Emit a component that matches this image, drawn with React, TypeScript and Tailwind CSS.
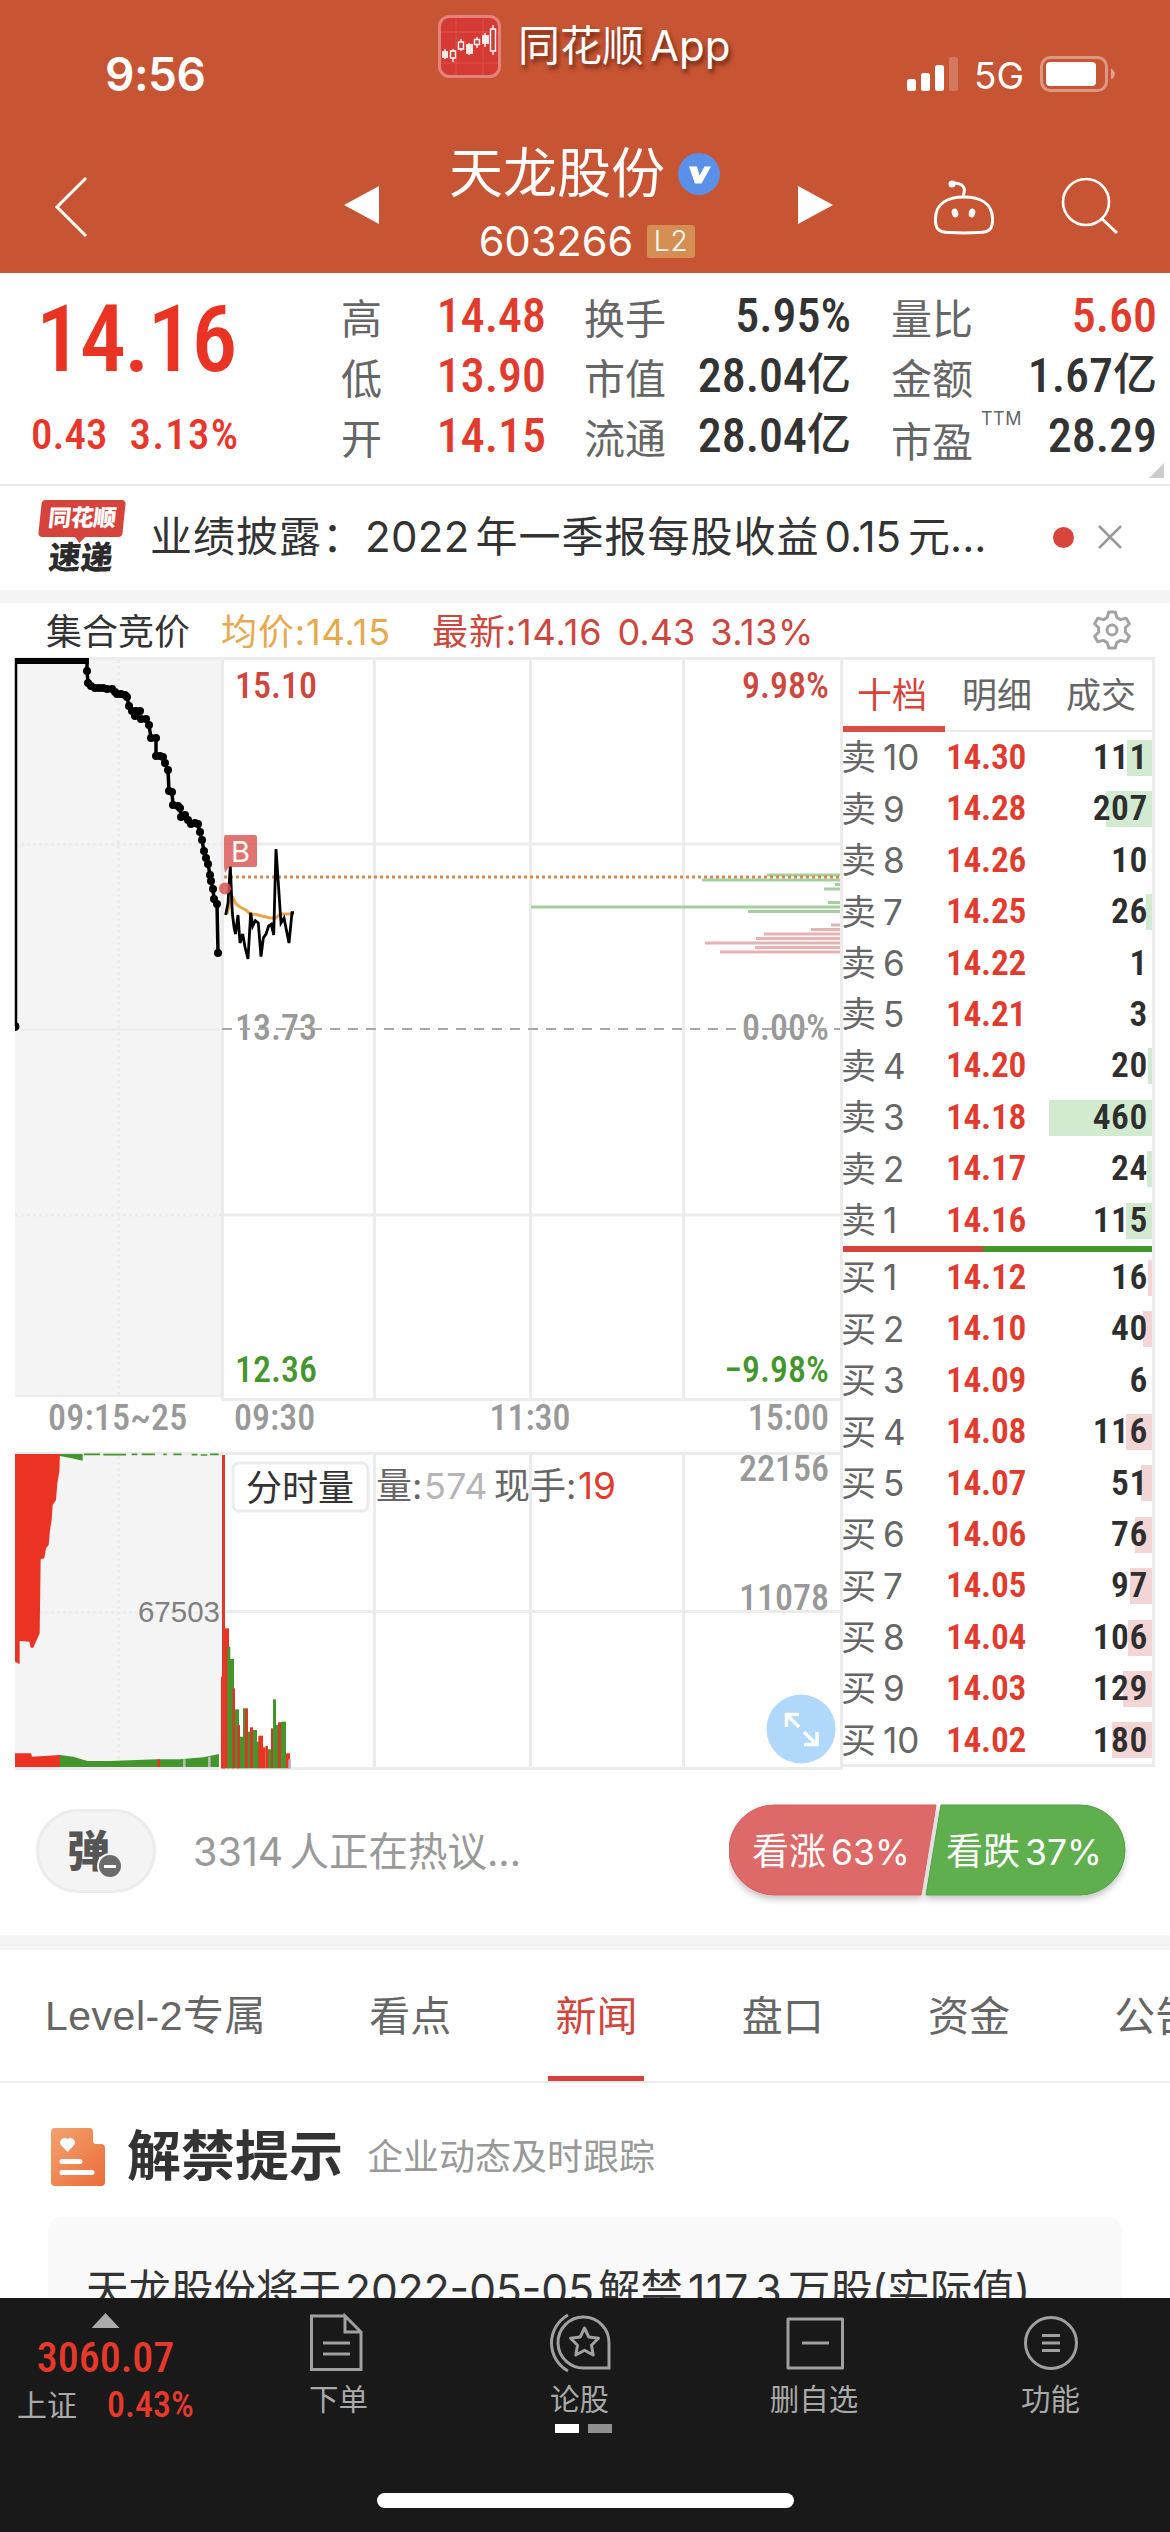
import { useState } from "react";

type Level = { label: string; no: number; price: string; volume: number };

const sells: Level[] = [
  { label: "卖", no: 10, price: "14.30", volume: 111 },
  { label: "卖", no: 9, price: "14.28", volume: 207 },
  { label: "卖", no: 8, price: "14.26", volume: 10 },
  { label: "卖", no: 7, price: "14.25", volume: 26 },
  { label: "卖", no: 6, price: "14.22", volume: 1 },
  { label: "卖", no: 5, price: "14.21", volume: 3 },
  { label: "卖", no: 4, price: "14.20", volume: 20 },
  { label: "卖", no: 3, price: "14.18", volume: 460 },
  { label: "卖", no: 2, price: "14.17", volume: 24 },
  { label: "卖", no: 1, price: "14.16", volume: 115 },
];

const buys: Level[] = [
  { label: "买", no: 1, price: "14.12", volume: 16 },
  { label: "买", no: 2, price: "14.10", volume: 40 },
  { label: "买", no: 3, price: "14.09", volume: 6 },
  { label: "买", no: 4, price: "14.08", volume: 116 },
  { label: "买", no: 5, price: "14.07", volume: 51 },
  { label: "买", no: 6, price: "14.06", volume: 76 },
  { label: "买", no: 7, price: "14.05", volume: 97 },
  { label: "买", no: 8, price: "14.04", volume: 106 },
  { label: "买", no: 9, price: "14.03", volume: 129 },
  { label: "买", no: 10, price: "14.02", volume: 180 },
];

// call auction track, 09:15 - 09:25
const auction = [
  [87, 661], [87, 671], [88, 683], [91, 686], [95, 688], [99, 688], [103, 688], [107, 689], [112, 689],
  [115, 692], [117, 694], [121, 694], [125, 695], [127, 697], [129, 706], [132, 711], [136, 711],
  [140, 711], [135, 716], [141, 719], [146, 719], [149, 725], [151, 738], [156, 738], [156, 756],
  [160, 756], [163, 757], [165, 763], [168, 770], [169, 791], [172, 792], [173, 805], [178, 806],
  [180, 808], [181, 817], [185, 815], [188, 820], [191, 824], [195, 823], [198, 824], [200, 832],
  [202, 840], [204, 851], [206, 858], [208, 864], [210, 875], [211, 881], [213, 889], [214, 899],
  [217, 904], [218, 953],
];

const priceLine =
  "225.7,915 228,903 230.3,866 232.3,913 234,927 235.5,934 238,915 240,943 242.7,934 245,947 248,959 250.7,912.7 252.7,926 255.3,920.7 258.3,923 261,956.7 263.3,938 266,934 268.7,926 271.3,924.3 273.7,935 276,849 281,923 284,918 286,928 289,943 292,912.7 294,912.7";

const averageLine =
  "227,914 231,899 233,898 236,904 240,907 246,910 250,914 256,914.5 262,916 270,918 276,918 280,914 286,914 294,914";

const depthGreen = [[767, 875], [702, 880], [835, 884.5], [824, 889], [828, 902.5], [531, 907], [748, 911.5]];
const depthRed = [[831, 925], [811, 929.5], [764, 934], [756, 938.5], [705, 943], [755, 947.5], [720, 952]];

// [x, width, top, colour] in a 3x grid
const volumes: [number, number, number, string][] = [
  [663, 12, 1190, "#ea3323"], [666, 9, 525, "#e2392b"], [675, 12, 1045, "#ea3323"], [682, 9, 1100, "#43962b"],
  [690, 12, 1137, "#43962b"], [697, 8, 1225, "#d43a2b"], [705, 12, 1288, "#43962b"], [712, 8, 1335, "#d43a2b"],
  [720, 10, 1370, "#43962b"], [729, 7, 1285, "#43962b"], [735, 9, 1285, "#d43a2b"], [744, 7, 1355, "#43962b"],
  [750, 9, 1342, "#d43a2b"], [759, 12, 1350, "#43962b"], [771, 6, 1385, "#43962b"], [775, 14, 1367, "#ea3323"],
  [789, 7, 1402, "#ea3323"], [796, 8, 1398, "#ea3323"], [804, 9, 1408, "#43962b"], [813, 6, 1345, "#d43a2b"],
  [819, 9, 1258, "#43962b"], [828, 6, 1335, "#43962b"], [834, 9, 1327, "#d43a2b"], [843, 15, 1325, "#43962b"],
  [858, 12, 1420, "#ea3323"], [865, 8, 1438, "#b9b9b9"],
];

const num = "font-['Roboto_Condensed',Roboto,'Noto_Sans_CJK_SC',sans-serif]";

function StatusBar() {
  return (
    <div className="flex h-[120px] items-start text-white">
      <div className="mt-[47px] ml-[105px] w-[333px] text-[46px] leading-[54px] font-semibold tracking-[-0.5px]">9:56</div>
      <svg className="mt-[15px] h-[63px] w-[63px]" viewBox="0 0 63 63">
        <rect x="1.5" y="1.5" width="60" height="60" rx="10" fill="#d63a35" stroke="#e4837b" strokeWidth="3" />
        <path d="M18 3v57M45 3v57M3 17h57M3 48h57" stroke="#de514a" strokeWidth="1" />
        <path d="M7 34v10M15 34v13M23 24v12M31 28v12M39 22v11M47 18v14M55 10v30" stroke="#fff" strokeWidth="1.3" />
        <path d="M4 36h6v7h-6zM28 29h7v10h-7zM44 20h7v9h-7z" fill="#ffe9e4" />
        <path d="M12.5 36h5v7h-5zM20.500 27h5v7h-5zM36.500 24.500h5v5h-5zM52.500 14h5v22h-5z" fill="#d63a35" stroke="#fff" strokeWidth="1.4" />
      </svg>
      <div className="mt-[19px] ml-[17px] w-[389px] text-[42px] leading-[54px] [text-shadow:2px_4px_4px_rgba(70,20,5,0.7)]">
        同花顺<span className="ml-[6px]">App</span>
      </div>
      <svg className="mt-[57px] h-[34px] w-[52px]" viewBox="0 0 52 34">
        <rect x="0" y="22" width="9" height="12" rx="2.500" fill="#fff" />
        <rect x="14" y="16" width="9" height="18" rx="2.500" fill="#fff" />
        <rect x="28" y="8" width="9" height="26" rx="2.500" fill="#fff" />
        <rect x="42" y="0" width="9" height="34" rx="2.500" fill="#fff" opacity=".22" />
      </svg>
      <div className="mt-[54px] ml-[15px] w-[66px] text-[37px] leading-[44px]">5G</div>
      <svg className="mt-[56px] h-[36px] w-[76px]" viewBox="0 0 76 36">
        <rect x="1.500" y="1.500" width="65" height="33" rx="9" fill="none" stroke="#fff" strokeWidth="3" opacity=".4" />
        <rect x="6" y="6" width="50" height="24" rx="4" fill="#fff" />
        <path d="M71 12.500c5 2 5 9 0 11z" fill="#fff" opacity=".45" />
      </svg>
    </div>
  );
}

function TitleBar() {
  return (
    <div className="flex h-[153px] items-start text-white">
      <svg className="mt-[55px] ml-[52px] h-[64px] w-[38px]" viewBox="0 0 38 64">
        <path d="M34 3L5 32l29 29" fill="none" stroke="#fff" strokeWidth="3" />
      </svg>
      <svg className="mt-[66px] ml-[254px] h-[38px] w-[35px]" viewBox="0 0 35 38">
        <path d="M0 19L35 0v38z" fill="#fff" />
      </svg>
      <div className="flex w-[419px] flex-col items-center pt-[22px]">
        <div className="flex items-center pr-[8px]">
          <div className="text-[54px] leading-[64px]">天龙股份</div>
          <svg className="ml-[13px] h-[42px] w-[42px]" viewBox="0 0 42 42">
            <circle cx="21" cy="21" r="21" fill="#5a90e8" />
            <path d="M11 13.500h8l2.500 9 5-9h6.500l-9.500 17h-6.500z" fill="#fff" />
          </svg>
        </div>
        <div className="mt-[10px] flex items-center pr-[3px]">
          <div className="text-[41.500px] leading-[50px]">603266</div>
          <div className="ml-[14px] flex h-[33px] w-[48px] items-center justify-center rounded-[3px] bg-[#d68f52] text-[28px] leading-none font-light tracking-[1px]">
            L2
          </div>
        </div>
      </div>
      <svg className="mt-[66px] h-[38px] w-[35px]" viewBox="0 0 35 38">
        <path d="M35 19L0 0v38z" fill="#fff" />
      </svg>
      <svg className="mt-[58px] ml-[99px] h-[58px] w-[64px]" viewBox="0 0 64 58" fill="none" stroke="#fff" strokeWidth="3">
        <path d="M32 19C48 19 60 25 60.500 40C61 51 58 54 47 54.500C38 55 26 55 17 54.500C6 54 3 51 3.500 40C4 25 16 19 32 19Z" />
        <path d="M31 18C35 9 30 5 21 5" />
        <circle cx="20" cy="6" r="3.500" fill="#fff" stroke="none" />
        <ellipse cx="23" cy="35" rx="3.200" ry="4.500" fill="#fff" stroke="none" transform="rotate(-14 23 35)" />
        <ellipse cx="40" cy="35" rx="3.200" ry="4.500" fill="#fff" stroke="none" transform="rotate(14 40 35)" />
      </svg>
      <svg className="mt-[57px] ml-[65px] h-[58px] w-[58px]" viewBox="0 0 58 58" fill="none" stroke="#fff" strokeWidth="2.600">
        <circle cx="25" cy="25" r="23" />
        <path d="M40 41l16 15" strokeWidth="3" />
      </svg>
    </div>
  );
}

function Stat({ label, value, unit, red, sup }: { label: string; value: string; unit?: string; red?: boolean; sup?: string }) {
  return (
    <div className="flex h-[60px] items-start justify-between">
      <div className="flex text-[41px] leading-[60px] text-[#666]">
        <span className={sup ? "relative top-[3px]" : ""}>{label}</span>
        {sup && <span className="ml-2 text-[18px] leading-[20px] tracking-[0.5px]">{sup}</span>}
      </div>
      <div className={`${num} flex text-[48px] leading-[53px] font-medium ${red ? "text-[#e23b2e]" : "text-[#333]"}`}>
        {value}
        {unit && <span className="text-[44px]">{unit}</span>}
      </div>
    </div>
  );
}

function Quote() {
  return (
    <div className="relative flex h-[213px] border-b-2 border-[#ebebeb]">
      <div className={`${num} ml-[31px] w-[310px] text-[#e9362a]`}>
        <div className="mt-[13px] ml-[5px] text-[92px] leading-[108px] font-medium tracking-[-2px] text-[#eb3323]">14.16</div>
        <div className="mt-[14px] flex gap-[22px] text-[43px] leading-[52px] font-medium">
          <span>0.43</span>
          <span className="tracking-[1.200px]">3.13%</span>
        </div>
      </div>
      <div className="w-[205px] pt-[16px]">
        <Stat label="高" value="14.48" red />
        <Stat label="低" value="13.90" red />
        <Stat label="开" value="14.15" red />
      </div>
      <div className="ml-[38px] w-[267px] pt-[16px]">
        <Stat label="换手" value="5.95%" />
        <Stat label="市值" value="28.04" unit="亿" />
        <Stat label="流通" value="28.04" unit="亿" />
      </div>
      <div className="ml-[40px] w-[266px] pt-[16px]">
        <Stat label="量比" value="5.60" red />
        <Stat label="金额" value="1.67" unit="亿" />
        <Stat label="市盈" value="28.29" sup="TTM" />
      </div>
      <div className="absolute right-[6px] bottom-[6px] h-[15px] w-[15px] bg-[#ccc] [clip-path:polygon(100%_0,100%_100%,0_100%)]" />
    </div>
  );
}

function NewsFlash() {
  const [open, setOpen] = useState(true);

  return (
    <div className="flex h-[104px] items-start">
      <div className="mt-[14px] ml-[37px] flex w-[89px] flex-col items-center font-black">
        <div className="relative flex h-[37px] w-[84px] -skew-x-6 items-center justify-center rounded-[4px] bg-[#d6433b] text-[23px] leading-none tracking-[-0.500px] text-white">
          同花顺
          <div className="absolute -bottom-[6px] left-[36px] h-[7px] w-[12px] bg-[#d6433b] [clip-path:polygon(0_0,100%_0,50%_100%)]" />
        </div>
        <div className="mt-[4px] -skew-x-6 text-[32px] leading-[34px] text-[#2b2b2b]">速递</div>
      </div>
      {open && (
        <>
          <div className="mt-[20px] ml-[24px] flex w-[903px] items-baseline text-[42px] leading-[62px] whitespace-nowrap text-[#333]">
            <span className="tracking-[1px]">业绩披露：</span>
            <span className="tracking-[0.300px]">2022</span>
            <span className="ml-[6px] tracking-[1px]">年一季报每股收益</span>
            <span className="ml-[5px]">0.15</span>
            <span className="ml-[7px]">元...</span>
          </div>
          <div className="mt-[41px] h-[21px] w-[21px] rounded-full bg-[#d8433c]" />
          <svg className="mt-[39px] ml-[24px] h-[24px] w-[24px]" viewBox="0 0 24 24" onClick={() => setOpen(false)}>
            <path d="M1 1l22 22M23 1L1 23" stroke="#999" strokeWidth="2.500" />
          </svg>
        </>
      )}
    </div>
  );
}

function ChartHeader() {
  return (
    <div className="flex h-[54px] items-center text-[36px] leading-[54px] whitespace-nowrap">
      <div className="mt-[3px] ml-[46px] w-[175px] text-[#333]">集合竞价</div>
      <div className="mt-[3px] w-[211px] tracking-[0.900px] text-[#e8a84c]">均价:14.15</div>
      <div className="mt-[3px] flex w-[656px] gap-[15px] text-[#cd463d]">
        <span className="tracking-[0.900px]">最新:14.16</span>
        <span>0.43</span>
        <span className="tracking-[0.600px]">3.13%</span>
      </div>
      <svg className="h-[48px] w-[48px]" viewBox="0 0 24 24" fill="none" stroke="#a3a3a3" strokeWidth="1.500" strokeLinejoin="round">
        <path d="M10.400 3h3.200l.8 2.700 1.900 1.100 2.800-.7 1.600 2.800-2 2v2.200l2 2-1.600 2.800-2.800-.7-1.900 1.100-.8 2.700h-3.200l-.8-2.700-1.900-1.100-2.800.7-1.600-2.800 2-2v-2.200l-2-2 1.600-2.800 2.800.7 1.900-1.100z" />
        <circle cx="12" cy="12" r="2.500" />
      </svg>
    </div>
  );
}

function Chart() {
  return (
    <svg className="h-[1113px] w-[843px] shrink-0" viewBox="0 657 843 1113">
      {/* price panel */}
      <rect x="15" y="657" width="207" height="739" fill="#f4f4f4" />
      <g stroke="#ececec" strokeWidth="3" fill="none">
        <path d="M15 658.500H842M222 844H842M222 1215H842M222 1399.500H842" />
        <path d="M222.500 657V1400M374.500 657V1400M530.500 657V1400M683.500 657V1400" />
        <path d="M841.500 657V1770" />
        <path d="M15 1029.500H222M15 1396H222" strokeWidth="2" />
        <path d="M118.500 660V1398M15 844.500H222M15 1215H222" strokeDasharray="3 3" />
      </g>
      <path d="M222 1029H840" stroke="#a8a8a8" strokeWidth="2" strokeDasharray="10 8" />

      {depthGreen.map(([x, y]) => (
        <rect key={y} x={x} y={y - 1.5} width={840 - x} height="3" fill="#a5cf9f" />
      ))}
      {depthRed.map(([x, y]) => (
        <rect key={y} x={x} y={y - 1.5} width={840 - x} height="3" fill="#e8b2b2" />
      ))}
      <path d="M224 877H840" stroke="#d8894a" strokeWidth="3" strokeDasharray="3 3" />

      <path d="M16 658V1026" stroke="#000" strokeWidth="2.500" />
      <path d="M15 1022a4.500 4.500 0 0 1 0 9z" fill="#000" />
      <rect x="15" y="658" width="74" height="6" fill="#000" />
      <polyline points={auction.map((p) => p.join(",")).join(" ")} fill="none" stroke="#000" strokeWidth="3.500" />
      {auction.slice(1).map(([x, y], i) => (
        <circle key={i} cx={x} cy={y} r="4" />
      ))}

      <polyline points={averageLine} fill="none" stroke="#eba64a" strokeWidth="3" />
      <polyline points={priceLine} fill="none" stroke="#000" strokeWidth="2.800" />
      <circle cx="225" cy="888.500" r="6" fill="#d95550" opacity=".85" />
      <path d="M226 835h29a2 2 0 0 1 2 2v28a2 2 0 0 1-2 2h-26l-4 6-1-6v-30a2 2 0 0 1 2-2z" fill="#d95c58" opacity=".85" />
      <text x="240.500" y="862" textAnchor="middle" fill="#fff" className="text-[29px]">B</text>

      <g className={`${num} text-[36px] font-medium`}>
        <text x="235" y="698" fill="#cf463d">15.10</text>
        <text x="829" y="698" textAnchor="end" fill="#cf463d">9.98%</text>
        <text x="235" y="1040" fill="#999">13.73</text>
        <text x="829" y="1040" textAnchor="end" fill="#999">0.00%</text>
        <text x="235" y="1382" fill="#43962b">12.36</text>
        <text x="829" y="1382" textAnchor="end" fill="#43962b">−9.98%</text>
        <g fill="#999">
          <text x="48" y="1430" className="tracking-[0.200px]">09:15~25</text>
          <text x="234" y="1430">09:30</text>
          <text x="530" y="1430" textAnchor="middle">11:30</text>
          <text x="829" y="1430" textAnchor="end">15:00</text>
        </g>
      </g>
      <path d="M222 1029H840" stroke="#a8a8a8" strokeWidth="1.500" strokeDasharray="10 8" />

      {/* volume panel */}
      <rect x="15" y="1453" width="207" height="315" fill="#f4f4f4" />
      <g stroke="#ececec" strokeWidth="3">
        <path d="M15 1453.500H842M222 1611.500H842M15 1768.500H842" />
        <path d="M374.500 1453V1768M530.500 1453V1768M683.500 1453V1768" />
        <path d="M118.500 1456V1766M15 1612.500H222" strokeDasharray="3 3" />
      </g>
      <g transform="translate(0 1280) scale(0.33333)">
        <path d="M45 522H180L178 575 172 610 168 660 158 675 155 720 150 750 146 795 138 805 133 835 122 838 119 1060 110 1080 100 1103H92L88 1085 59 1083V1152L45 1145Z" fill="#ea3323" />
        <path d="M180 522H248V542L215 535 180 528Z" fill="#43962b" />
        <path d="M252 523H300M310 524H378M395 523H412M425 523H465M490 523H500M520 523H545M575 524H592M602 525H622M630 523H656" stroke="#43962b" strokeWidth="5" />
        <path d="M45 1420H93L96 1430 180 1425V1461H45Z" fill="#ea3323" />
        <path d="M180 1425L220 1430 262 1443H330L470 1438H540L610 1432 657 1422V1461H180Z" fill="#43962b" />
        <path d="M476 1438V1461" stroke="#ea3323" strokeWidth="8" />
        <path d="M553 1438V1461M628 1430V1461" stroke="#b9b9b9" strokeWidth="8" />
        {volumes.map(([x, w, top, fill]) => (
          <rect key={x} x={x} y={top} width={w} height={1465 - top} fill={fill} />
        ))}
      </g>
      <text x="220" y="1622" textAnchor="end" fill="#808080" className="font-['Liberation_Sans',Arial,sans-serif] text-[29.500px]">67503</text>
      <g className={`${num} text-[36px] font-medium`} fill="#999">
        <text x="829" y="1480.500" textAnchor="end">22156</text>
        <text x="829" y="1610" textAnchor="end">11078</text>
      </g>
      <rect x="233" y="1463" width="135" height="48" rx="6" fill="#fff" stroke="#ececec" strokeWidth="3" />
      <g className="text-[36px]">
        <text x="246" y="1501" fill="#333">分时量</text>
        <text x="376" y="1499" fill="#666">量:</text>
        <text x="424" y="1499" fill="#b5b5b5">574</text>
        <text x="494" y="1499" fill="#666">现手:</text>
        <text x="578" y="1499" fill="#e23b2e" className="text-[37px]">19</text>
      </g>
      <circle cx="801" cy="1729" r="34.500" fill="#b0d8fb" />
      <path d="M799 1727L787 1715M786.500 1727V1714.500H799M804 1732L816 1744M817 1732V1744.500H804" fill="none" stroke="#fff" strokeWidth="3.500" />
    </svg>
  );
}

function LevelRow({ level, side }: { level: Level; side: "sell" | "buy" }) {
  return (
    <div className="relative flex h-[51.400px] items-center">
      <div
        className={`absolute right-0 top-[8px] h-[36px] ${side === "sell" ? "bg-[#d2ead0]" : "bg-[#f4d5d6]"}`}
        style={{ width: level.volume < 12 ? 0 : Math.round((level.volume * 103) / 460) }}
      />
      <div className="relative flex w-[103px] text-[35px] text-[#666]">
        <span className="-ml-[2px] w-[42px]">{level.label}</span>
        {level.no}
      </div>
      <div className={`${num} relative text-[35.500px] font-semibold tracking-[-0.300px] text-[#e23b2e]`}>{level.price}</div>
      <div className={`${num} relative ml-auto mr-[4px] text-[35.500px] font-semibold tracking-[0.600px] text-[#2e2e2e]`}>{level.volume}</div>
    </div>
  );
}

function OrderBook() {
  return (
    <div className="flex h-[1110px] w-[312px] flex-col border-t-[3px] border-r-[3px] border-b-[3px] border-[#ececec]">
      <div className="flex h-[72px] shrink-0 border-b-2 border-[#ececec] text-[35px] leading-[70px] text-[#666]">
        <div className="-mb-[2px] w-[102px] border-b-[6px] border-[#db4f42] pl-[14px] text-[#d8433c]">十档</div>
        <div className="w-[104px] pl-[17px]">明细</div>
        <div className="pl-[17px]">成交</div>
      </div>
      <div>
        {sells.map((l) => (
          <LevelRow key={l.no} level={l} side="sell" />
        ))}
      </div>
      <div className="flex h-[6px] shrink-0">
        <div className="w-[140px] bg-[#d6433b]" />
        <div className="flex-1 bg-[#43962b]" />
      </div>
      <div>
        {buys.map((l) => (
          <LevelRow key={l.no} level={l} side="buy" />
        ))}
      </div>
    </div>
  );
}

function HotBar() {
  return (
    <div className="flex h-[165px] items-start">
      <div className="relative mt-[39px] ml-[36px] flex h-[84px] w-[120px] items-center rounded-full border-[3px] border-[#ececec] bg-[#f4f4f4] pl-[28px]">
        <span className="text-[43px] leading-none font-black text-[#555]">弹</span>
        <div className="absolute top-[41px] left-[58px] flex h-[26px] w-[26px] items-center justify-center rounded-full border-[2px] border-[#f4f4f4] bg-[#6b6b6b]">
          <div className="h-[3px] w-[12px] bg-white" />
        </div>
      </div>
      <div className="mt-[53px] ml-[37px] w-[536px] text-[39.500px] leading-[58px] text-[#999]">
        3314<span className="ml-[6px]">人正在热议...</span>
      </div>
      <svg className="mt-[29px] h-[112px] w-[408px]" viewBox="0 0 408 112">
        <defs>
          <filter id="drop" x="-10%" y="-10%" width="120%" height="130%">
            <feDropShadow dx="0" dy="4" stdDeviation="3" floodColor="#000" floodOpacity=".22" />
          </filter>
        </defs>
        <g filter="url(#drop)">
          <path d="M45 6H207L192 96H45a45 45 0 0 1 0-90z" fill="#dd6a67" stroke="#d95f5a" />
          <path d="M212 6H351a45 45 0 0 1 0 90H197z" fill="#60af50" stroke="#539e42" />
        </g>
        <text x="23" y="66" fill="#fff" className="text-[37px]">看涨</text>
        <text x="102" y="66" fill="#fff" className="text-[35.500px]">63%</text>
        <text x="217" y="66" fill="#fff" className="text-[37px]">看跌</text>
        <text x="296" y="66" fill="#fff" className="text-[35.500px]">37%</text>
      </svg>
    </div>
  );
}

function Tabs() {
  const [tab, setTab] = useState("新闻");
  const tabs = ["看点", "新闻", "盘口", "资金", "公告"];

  return (
    <div className="flex h-[133px] overflow-hidden border-b-2 border-[#ececec] text-[41px] leading-[132px] whitespace-nowrap text-[#666]">
      <div className="ml-[45px] w-[272px] shrink-0 font-['Liberation_Sans','Noto_Sans_CJK_SC',sans-serif] tracking-[0.500px]">Level-2专属</div>
      {tabs.map((t) => (
        <div key={t} className="flex w-[186.300px] shrink-0 flex-col items-center" onClick={() => setTab(t)}>
          <div className={`h-[126px] ${t === tab ? "text-[#d0453c]" : ""}`}>{t}</div>
          {t === tab && <div className="h-[6px] w-[96px] bg-[#d6433b]" />}
        </div>
      ))}
    </div>
  );
}

function Notice() {
  return (
    <div className="h-[215px] overflow-hidden">
      <div className="flex h-[134px] items-center pt-[14px]">
        <svg className="ml-[50px] h-[58px] w-[55px]" viewBox="0 0 55 58">
          <defs>
            <linearGradient id="doc" x1="0" y1="0" x2="1" y2="1">
              <stop offset="0" stopColor="#f2a36f" />
              <stop offset="1" stopColor="#ec6c38" />
            </linearGradient>
          </defs>
          <path d="M5 0H39a4 4 0 0 1 4 4v9a3 3 0 0 0 3 3h5a4 4 0 0 1 4 4V54a4 4 0 0 1-4 4H5a4 4 0 0 1-4-4V4a4 4 0 0 1 4-4z" fill="url(#doc)" />
          <path d="M17.500 24l-7-7.500a4.600 4.600 0 0 1 7-5.500a4.600 4.600 0 0 1 7 5.500z" fill="#fff" />
          <path d="M12 33.500H30M12 44.500H42" stroke="#fff" strokeWidth="5" strokeLinecap="round" />
        </svg>
        <div className="ml-[22px] text-[54px] leading-none font-bold text-[#333]">解禁提示</div>
        <div className="ml-[24px] text-[36px] leading-none text-[#999]">企业动态及时跟踪</div>
      </div>
      <div className="mx-[48px] h-[160px] rounded-[14px] bg-[#f9f9f9] pt-[42px] pl-[38px] text-[42.500px] leading-[62px] whitespace-nowrap text-[#333]">
        天龙股份将于<span className="mx-[4px]">2022-05-05</span>解禁<span className="mx-[5px] tracking-[0.800px]">117.3</span>万股
        <span className="-ml-[1px]">(实际值)</span>
      </div>
    </div>
  );
}

function BottomBar() {
  return (
    <div className="flex h-[234px] flex-col bg-[#191919] text-[#a9a9a9]">
      <div className="flex h-[195px]">
        <div className="flex w-[211px] flex-col items-center pt-[15px]">
          <div className="h-[15px] w-[28px] bg-[#aaa] [clip-path:polygon(50%_0,100%_100%,0_100%)]" />
          <div className={`${num} mt-[5px] text-[42px] leading-[50px] font-medium text-[#e6392b]`}>3060.07</div>
          <div className="-mt-[1px] flex items-center gap-[30px] text-[30px] leading-[46px]">
            上证<span className={`${num} text-[36px] font-medium text-[#e6392b]`}>0.43%</span>
          </div>
        </div>
        <div className="flex w-[255px] flex-col items-center pt-[15px]">
          <svg className="h-[60px] w-[60px]" viewBox="0 0 60 60" fill="none" stroke="#a0a0a0" strokeWidth="3">
            <path d="M36 3H2.500V56.500H52V19L36 3V19H52" />
            <path d="M14 30H41M14 41H41" />
          </svg>
          <div className="mt-[3px] text-[29.500px] leading-[46px]">下单</div>
        </div>
        <div className="flex w-[227px] flex-col items-center pt-[15px]">
          <svg className="h-[60px] w-[62px]" viewBox="0 0 62 60" fill="none" stroke="#a0a0a0" strokeWidth="3">
            <path d="M60 55H36A25.500 25.500 0 1 1 60 30Z" />
            <path d="M19 2A32 32 0 0 0 19 58" />
            <path d="M35.500 15l4.300 9 9.700 1.300-7 6.900 1.700 9.800-8.700-4.700-8.700 4.700 1.700-9.800-7-6.900 9.700-1.300z" strokeLinejoin="round" />
          </svg>
          <div className="mt-[3px] text-[29.500px] leading-[46px]">论股</div>
          <div className="mt-[2px] flex gap-[9px] pl-[8px]">
            <div className="h-[9px] w-[24px] bg-white" />
            <div className="h-[9px] w-[24px] bg-[#8f8f8f]" />
          </div>
        </div>
        <div className="flex w-[242px] flex-col items-center pt-[15px]">
          <svg className="h-[60px] w-[60px]" viewBox="0 0 60 60" fill="none" stroke="#a0a0a0" strokeWidth="3">
            <path d="M4 6H58.500V55H4ZM18 30H45" strokeLinejoin="round" />
          </svg>
          <div className="mt-[3px] text-[29.500px] leading-[46px]">删自选</div>
        </div>
        <div className="flex flex-1 flex-col items-center pr-[4px] pt-[15px]">
          <svg className="h-[60px] w-[60px]" viewBox="0 0 60 60" fill="none" stroke="#a0a0a0" strokeWidth="3">
            <circle cx="30" cy="30" r="25.500" />
            <path d="M21 22.500H39M21 30H39M21 37.500H39" />
          </svg>
          <div className="mt-[3px] text-[29.500px] leading-[46px]">功能</div>
        </div>
      </div>
      <div className="mx-auto h-[15px] w-[417px] rounded-full bg-white" />
    </div>
  );
}

export default function App() {
  return (
    <div className="h-[2532px] w-[1170px] overflow-hidden bg-white font-[Inter,'Noto_Sans_CJK_SC',sans-serif]">
      <div className="h-[273px] bg-[#c75433]">
        <StatusBar />
        <TitleBar />
      </div>
      <Quote />
      <NewsFlash />
      <div className="h-[13px] bg-[#f4f4f4]" />
      <ChartHeader />
      <div className="flex h-[1113px]">
        <Chart />
        <OrderBook />
      </div>
      <HotBar />
      <div className="h-[15px] bg-[#f4f4f4]" />
      <Tabs />
      <Notice />
      <BottomBar />
    </div>
  );
}
